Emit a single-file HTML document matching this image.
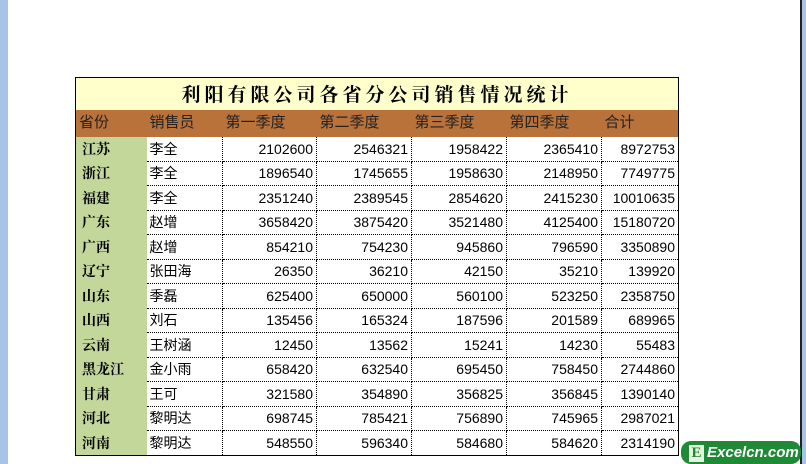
<!DOCTYPE html><html><head><style>
body{margin:0;width:806px;height:464px;background:#a6c3e8;position:relative;overflow:hidden;font-family:"Liberation Sans","Noto Sans CJK SC",sans-serif}
.pg{position:absolute;left:8px;top:0;width:792px;height:464px;background:#fff;border-right:2px solid #222}
table{position:absolute;left:75px;top:77px;border-collapse:collapse;border:1px solid #000;table-layout:fixed;width:603px}
td{padding:0 3px;font-size:14px;height:24.5px;line-height:16px;white-space:nowrap;overflow:hidden;border-right:1px dotted #000;border-bottom:1px dotted #000;box-sizing:border-box}
.t td{height:32px;background:#ffffcc;text-align:center;font-family:"Noto Serif CJK SC",serif;font-weight:bold;font-size:19px;letter-spacing:4px;border:none}
.h td{height:27px;background:#b9723a;color:#222;font-size:15px;border:none}
td.p{background:#c4d79b;font-family:"Noto Serif CJK SC",serif;font-weight:bold;border:none;padding-left:6px}
td.n{text-align:right}
.logo{position:absolute;left:681px;top:441px;width:120px;height:23px;background:#1e8a35;border-radius:10px;color:#fff;font:italic bold 15px "Liberation Sans",sans-serif;line-height:23px}
.logo b{display:inline-block;background:#e8f0e0;color:#1e8a35;width:15px;height:17px;line-height:17px;text-align:center;margin:0 3px 0 8px;font-style:normal;font-family:"Liberation Serif",serif}
</style></head><body><div class="pg"></div>
<table>
<colgroup><col style="width:71px"><col style="width:76px"><col style="width:94px"><col style="width:95px"><col style="width:95px"><col style="width:95px"><col style="width:77px"></colgroup>
<tr class="t"><td colspan="7">利阳有限公司各省分公司销售情况统计</td></tr>
<tr class="h"><td>省份</td><td>销售员</td><td>第一季度</td><td>第二季度</td><td>第三季度</td><td>第四季度</td><td>合计</td></tr>
<tr><td class="p">江苏</td><td>李全</td><td class="n">2102600</td><td class="n">2546321</td><td class="n">1958422</td><td class="n">2365410</td><td class="n">8972753</td></tr>
<tr><td class="p">浙江</td><td>李全</td><td class="n">1896540</td><td class="n">1745655</td><td class="n">1958630</td><td class="n">2148950</td><td class="n">7749775</td></tr>
<tr><td class="p">福建</td><td>李全</td><td class="n">2351240</td><td class="n">2389545</td><td class="n">2854620</td><td class="n">2415230</td><td class="n">10010635</td></tr>
<tr><td class="p">广东</td><td>赵增</td><td class="n">3658420</td><td class="n">3875420</td><td class="n">3521480</td><td class="n">4125400</td><td class="n">15180720</td></tr>
<tr><td class="p">广西</td><td>赵增</td><td class="n">854210</td><td class="n">754230</td><td class="n">945860</td><td class="n">796590</td><td class="n">3350890</td></tr>
<tr><td class="p">辽宁</td><td>张田海</td><td class="n">26350</td><td class="n">36210</td><td class="n">42150</td><td class="n">35210</td><td class="n">139920</td></tr>
<tr><td class="p">山东</td><td>季磊</td><td class="n">625400</td><td class="n">650000</td><td class="n">560100</td><td class="n">523250</td><td class="n">2358750</td></tr>
<tr><td class="p">山西</td><td>刘石</td><td class="n">135456</td><td class="n">165324</td><td class="n">187596</td><td class="n">201589</td><td class="n">689965</td></tr>
<tr><td class="p">云南</td><td>王树涵</td><td class="n">12450</td><td class="n">13562</td><td class="n">15241</td><td class="n">14230</td><td class="n">55483</td></tr>
<tr><td class="p">黑龙江</td><td>金小雨</td><td class="n">658420</td><td class="n">632540</td><td class="n">695450</td><td class="n">758450</td><td class="n">2744860</td></tr>
<tr><td class="p">甘肃</td><td>王可</td><td class="n">321580</td><td class="n">354890</td><td class="n">356825</td><td class="n">356845</td><td class="n">1390140</td></tr>
<tr><td class="p">河北</td><td>黎明达</td><td class="n">698745</td><td class="n">785421</td><td class="n">756890</td><td class="n">745965</td><td class="n">2987021</td></tr>
<tr><td class="p">河南</td><td>黎明达</td><td class="n">548550</td><td class="n">596340</td><td class="n">584680</td><td class="n">584620</td><td class="n">2314190</td></tr>
</table>
<div class="logo"><b>E</b>Excelcn.com</div>
</body></html>
